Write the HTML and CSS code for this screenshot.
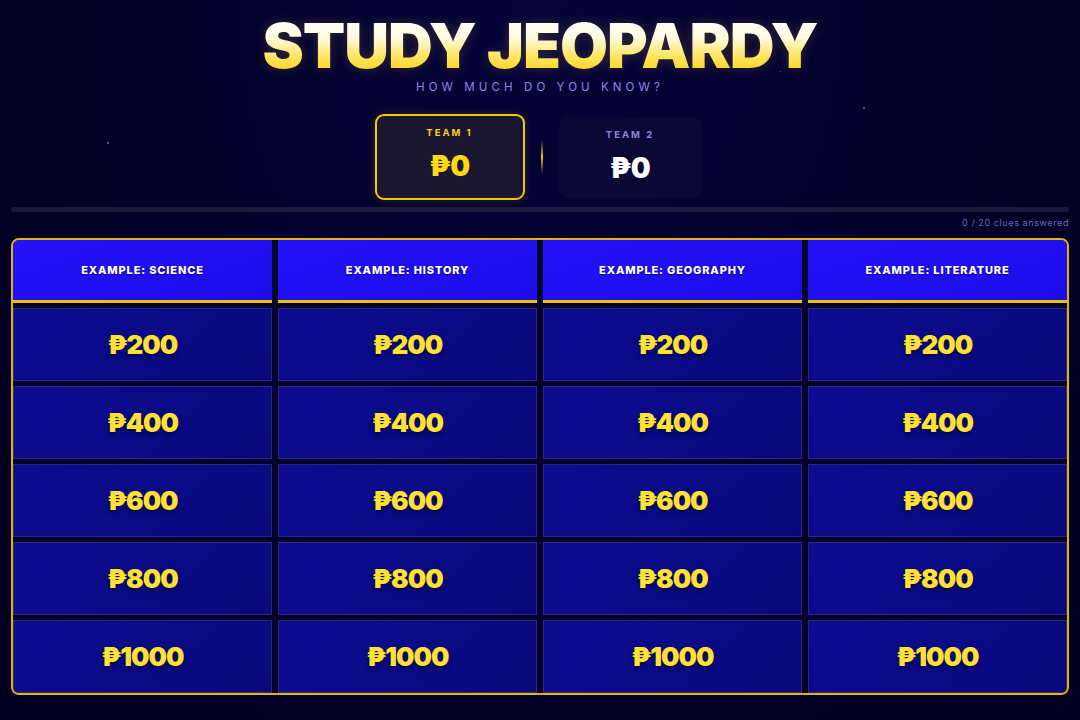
FILE: index.html
```html
<!DOCTYPE html>
<html>
<head>
<meta charset="utf-8">
<link rel="stylesheet" href="styles.css">
</head>
<body>
<div class="stars">
  <span class="star s1"></span>
  <span class="star s2"></span>
  <span class="star s3"></span>
</div>
<header class="top">
  <h1 class="title">STUDY JEOPARDY</h1>
  <p class="subtitle">HOW MUCH DO YOU KNOW?</p>
  <div class="teams">
    <div class="team active">
      <div class="team-label">TEAM 1</div>
      <div class="team-score">₱0</div>
    </div>
    <div class="divider"></div>
    <div class="team">
      <div class="team-label">TEAM 2</div>
      <div class="team-score">₱0</div>
    </div>
  </div>
</header>
<div class="progress"><div class="progress-fill"></div></div>
<div class="progress-text">0 / 20 clues answered</div>
<main class="board">
  <div class="cat">EXAMPLE: SCIENCE</div>
  <div class="cat">EXAMPLE: HISTORY</div>
  <div class="cat">EXAMPLE: GEOGRAPHY</div>
  <div class="cat">EXAMPLE: LITERATURE</div>
  <div class="clue">₱200</div><div class="clue">₱200</div><div class="clue">₱200</div><div class="clue">₱200</div>
  <div class="clue">₱400</div><div class="clue">₱400</div><div class="clue">₱400</div><div class="clue">₱400</div>
  <div class="clue">₱600</div><div class="clue">₱600</div><div class="clue">₱600</div><div class="clue">₱600</div>
  <div class="clue">₱800</div><div class="clue">₱800</div><div class="clue">₱800</div><div class="clue">₱800</div>
  <div class="clue">₱1000</div><div class="clue">₱1000</div><div class="clue">₱1000</div><div class="clue">₱1000</div>
</main>
</body>
</html>
```
FILE: styles.css
```css
* { box-sizing: border-box; }
html, body { margin: 0; padding: 0; }
body {
  width: 1080px;
  height: 720px;
  overflow: hidden;
  background: radial-gradient(ellipse at 50% 0%, #06043a 0%, #030128 55%, #02011f 100%);
  font-family: "Inter", "Liberation Sans", sans-serif;
  color: #fff;
  padding: 0 11px;
  position: relative;
}
.stars { position: absolute; inset: 0; pointer-events: none; }
.star { position: absolute; width: 2px; height: 2px; border-radius: 50%; background: #6f6ca8; }
.s1 { left: 107px; top: 142px; }
.s2 { left: 863px; top: 107px; }
.s3 { left: 780px; top: 71px; width: 1px; height: 1px; }

.top { display: flex; flex-direction: column; align-items: center; }
.title {
  margin: 18px 0 0;
  font-size: 62px;
  font-weight: 900;
  line-height: 56px;
  letter-spacing: -1px;
  background: linear-gradient(180deg, #ffffff 0%, #fffbe0 35%, #ffe45a 70%, #f7d21a 100%);
  -webkit-background-clip: text;
  background-clip: text;
  color: transparent;
  filter: drop-shadow(0 0 6px rgba(255, 215, 60, 0.18));
}
.subtitle {
  margin: 6px 0 0;
  font-size: 11.5px;
  line-height: 14px;
  letter-spacing: 4.1px;
  color: #8d88e6;
  font-weight: 400;
}
.teams { display: flex; align-items: center; gap: 16px; margin-top: 20px; margin-right: 4px; }
.team {
  width: 143px;
  height: 81px;
  border-radius: 9px;
  background: #0b0836;
  display: flex;
  flex-direction: column;
  align-items: center;
  padding-top: 12px;
}
.team.active {
  width: 150px;
  height: 86px;
  border: 2px solid #f5c800;
  background: #1a1630;
  box-shadow: 0 0 10px rgba(245, 200, 0, 0.15);
  padding-top: 11px;
}
.team-label { font-size: 9.5px; font-weight: 700; letter-spacing: 2px; color: #8c86e0; line-height: 12px; }
.active .team-label { color: #f7d11a; }
.team-score { font-size: 28px; font-weight: 900; margin-top: 10px; color: #fff; line-height: 34px; letter-spacing: -0.5px; }
.active .team-score { color: #ffd814; }
.divider {
  width: 2px;
  height: 34px;
  background: linear-gradient(180deg, rgba(245,200,0,0), #f5c800 50%, rgba(245,200,0,0));
}

.progress {
  margin-top: 7px;
  height: 5px;
  border-radius: 3px;
  background: #1c1a3c;
}
.progress-text {
  text-align: right;
  font-size: 9px;
  color: #6e69b8;
  letter-spacing: 0.6px;
  margin-top: 5px;
  line-height: 12px;
}

.board {
  margin-top: 9px;
  height: 457px;
  border: 2px solid #e0b40a;
  border-radius: 8px;
  background: #04022c;
  display: grid;
  grid-template-columns: repeat(4, 1fr);
  grid-template-rows: 63px repeat(5, 1fr);
  column-gap: 6px;
  row-gap: 5px;
  overflow: hidden;
}
.cat {
  background: linear-gradient(160deg, #2413f8 0%, #1c0ceb 100%);
  border-bottom: 3px solid #f2c200;
  display: flex;
  align-items: center;
  justify-content: center;
  font-size: 11px;
  font-weight: 800;
  letter-spacing: 0.85px;
  color: #fff;
  text-shadow: 0 1px 2px rgba(0, 0, 40, 0.6);
}
.clue {
  background: linear-gradient(135deg, #0d0b92 0%, #0a0a84 60%, #09097c 100%);
  border: 1px solid #2b2a7a;
  display: flex;
  align-items: center;
  justify-content: center;
  font-size: 26px;
  font-weight: 900;
  letter-spacing: -1px;
  color: #ffe034;
  text-shadow: 0 2px 4px rgba(0, 0, 30, 0.7);
}
```
